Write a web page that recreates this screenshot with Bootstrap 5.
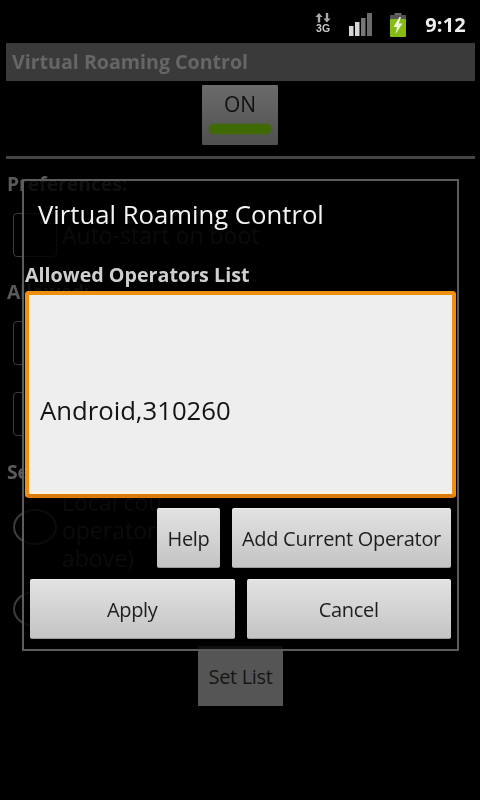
<!DOCTYPE html>
<html lang="en">
<head>
<meta charset="utf-8">
<title>Virtual Roaming Control</title>
<link href="https://cdn.jsdelivr.net/npm/bootstrap@5.3.0/dist/css/bootstrap.min.css" rel="stylesheet">
<style>
html,body{height:100%;background:#000;overflow:hidden}
body{font-family:"Open Sans","Noto Sans",sans-serif;position:relative}
.screen{width:480px;height:800px;position:relative;filter:blur(.45px)}
.statusbar{height:43px;padding-right:14px}
.net{width:16px;height:22px;margin-right:18px;margin-top:5px}
.net-t{font:700 10.5px/10px "Liberation Sans",sans-serif;color:#ccc;letter-spacing:.3px}
.bars{margin-right:16px;margin-top:6px}
.batt{margin-right:18px;margin-top:6px}
.clock{font:700 20px/24px "Open Sans",sans-serif;color:#eee;margin-top:7px;letter-spacing:.2px}
.appbar{height:38px;margin:0 5px 0 6px;background:#3a3a3a;color:#666;font-size:19.6px;font-weight:700;line-height:37px;padding-left:6px}
.togglewrap{height:75px;padding-top:4px}
.toggle{width:76px;height:60px;background:linear-gradient(#6b6b6b,#505050);color:#111;font-size:21px;line-height:22px;padding-top:8px;text-align:center;border-radius:1px}
.lamp{width:62px;height:10px;margin:9px auto 0;background:#3f6a02;border-radius:5px;box-shadow:0 0 2px #3f6a02}
.rule{height:3px;background:#444;margin:0 5px 0 6px}
.seclabel{color:#5a5a5a;font-size:19.3px;font-weight:700;line-height:24px;padding-left:7px}
.g13{margin-top:13px}.g17{margin-top:17px}.g19{margin-top:19px}.g23{margin-top:23px}.g24{margin-top:24px}.g27{margin-top:27px}.g4{margin-top:4px}
.pref{margin-left:13px;color:#3e3e3e;font-size:23px;line-height:24px}
.tall{line-height:28px}
.chk{width:44px;height:44px;border:1px solid #3c3c3c;border-radius:4px;flex:none;margin-right:5px}
.rad{width:44px;height:36px;border:2px solid #3c3c3c;border-radius:50%;flex:none;margin-right:5px}
.radtop{margin-top:21px}
.setwrap{position:absolute;left:198px;top:646px}
.setbtn{width:85px;height:60px;background:#555;color:#161616;font-size:20px;letter-spacing:-.35px;line-height:62px;text-align:center}
.dlg{position:absolute;left:22px;top:179px;width:437px;height:472px;border:2px solid #5c5c5c;background:rgba(0,0,0,.82)}
.dlg-title{color:#f4f4f4;font-size:25.7px;line-height:34px;padding:17px 0 0 14px;height:69px}
.dlg-label{color:#cfcfcf;font-size:19.7px;font-weight:700;line-height:24px;padding-left:1px;height:41px;padding-top:13px}
.field{height:207px;margin-left:1px;width:431px;background:#eeeeef;border:4px solid #ee8f10;border-bottom-color:#d97c0c;border-radius:4px;color:#141414;font-size:25.7px;padding:34px 0 0 11px;box-shadow:inset 0 -8px 0 -5px #fbf3e6}
.btnrow{gap:12px}
.droid{background:linear-gradient(#e2e2e2,#c4c4c4);color:#1e1e1e;height:60px;border:0;border-top:1px solid #efefef;border-bottom:1px solid #9b9b9b;border-radius:2px;font-size:20px;letter-spacing:-.3px;padding:2px 0 0;box-shadow:none}
.droid:hover{background:linear-gradient(#e2e2e2,#c4c4c4);color:#1e1e1e}
.b-help{width:63px}
.b-add{width:219px}
.b-wide{width:205px}
.r1{margin-top:10px;padding-right:6px}
.r2{margin-top:11px;padding:0 6px}
</style>
</head>
<body>
<div class="screen">
  <div class="statusbar d-flex align-items-center justify-content-end">
    <div class="net d-flex flex-column align-items-center">
      <svg width="16" height="10" viewBox="0 0 16 10"><path d="M4 0 7.6 4H5.2V9.500H2.800V4H.4ZM12 9.500 8.400 5.500H10.800V0H13.200V5.500H15.600Z" fill="#aaa"/></svg>
      <span class="net-t">3G</span>
    </div>
    <svg class="bars" width="24" height="23" viewBox="0 0 24 23"><rect x="0" y="13" width="4.500" height="10" fill="#d6d6d6"/><rect x="6" y="9" width="4.500" height="14" fill="#d6d6d6"/><rect x="12" y="5" width="4.500" height="18" fill="#777"/><rect x="18" y="0" width="5" height="23" fill="#6c6c6c"/></svg>
    <svg class="batt" width="18" height="24" viewBox="0 0 18 24"><rect x="5.500" y="0" width="7" height="3" fill="#666"/><rect x="1" y="2" width="16" height="6" fill="#555"/><rect x="1" y="6" width="16" height="18" rx="1" fill="#86bb14"/><path d="M10.500 4 4.500 14H8L6.500 21 13.500 10.500H9.800L12 4Z" fill="#eef6d6"/></svg>
    <div class="clock">9:12</div>
  </div>
  <div class="appbar">Virtual Roaming Control</div>
  <div class="togglewrap d-flex justify-content-center"><div class="toggle">ON<div class="lamp"></div></div></div>
  <div class="rule"></div>
  <div class="seclabel g13">Preferences:</div>
  <div class="pref d-flex align-items-center g17"><span class="chk"></span><span>Auto-start on boot</span></div>
  <div class="seclabel g23">Allowed:</div>
  <div class="pref d-flex align-items-center g17"><span class="chk"></span></div>
  <div class="pref d-flex align-items-center g27"><span class="chk"></span></div>
  <div class="seclabel g24">Set:</div>
  <div class="pref tall d-flex g4"><span class="rad radtop"></span><span>Local cou<br>operator<br>above)</span></div>
  <div class="pref d-flex g19"><span class="rad"></span></div>
  <div class="setwrap"><div class="setbtn">Set List</div></div>

  <div class="dlg d-flex flex-column">
    <div class="dlg-title">Virtual Roaming Control</div>
    <div class="dlg-label">Allowed Operators List</div>
    <div class="field d-flex align-items-center">Android,310260</div>
    <div class="btnrow r1 d-flex justify-content-end">
      <button class="btn droid b-help">Help</button>
      <button class="btn droid b-add">Add Current Operator</button>
    </div>
    <div class="btnrow r2 d-flex justify-content-between">
      <button class="btn droid b-wide">Apply</button>
      <button class="btn droid b-wide">Cancel</button>
    </div>
  </div>
</div>
<script src="https://cdn.jsdelivr.net/npm/bootstrap@5.3.0/dist/js/bootstrap.bundle.min.js"></script>
</body>
</html>
